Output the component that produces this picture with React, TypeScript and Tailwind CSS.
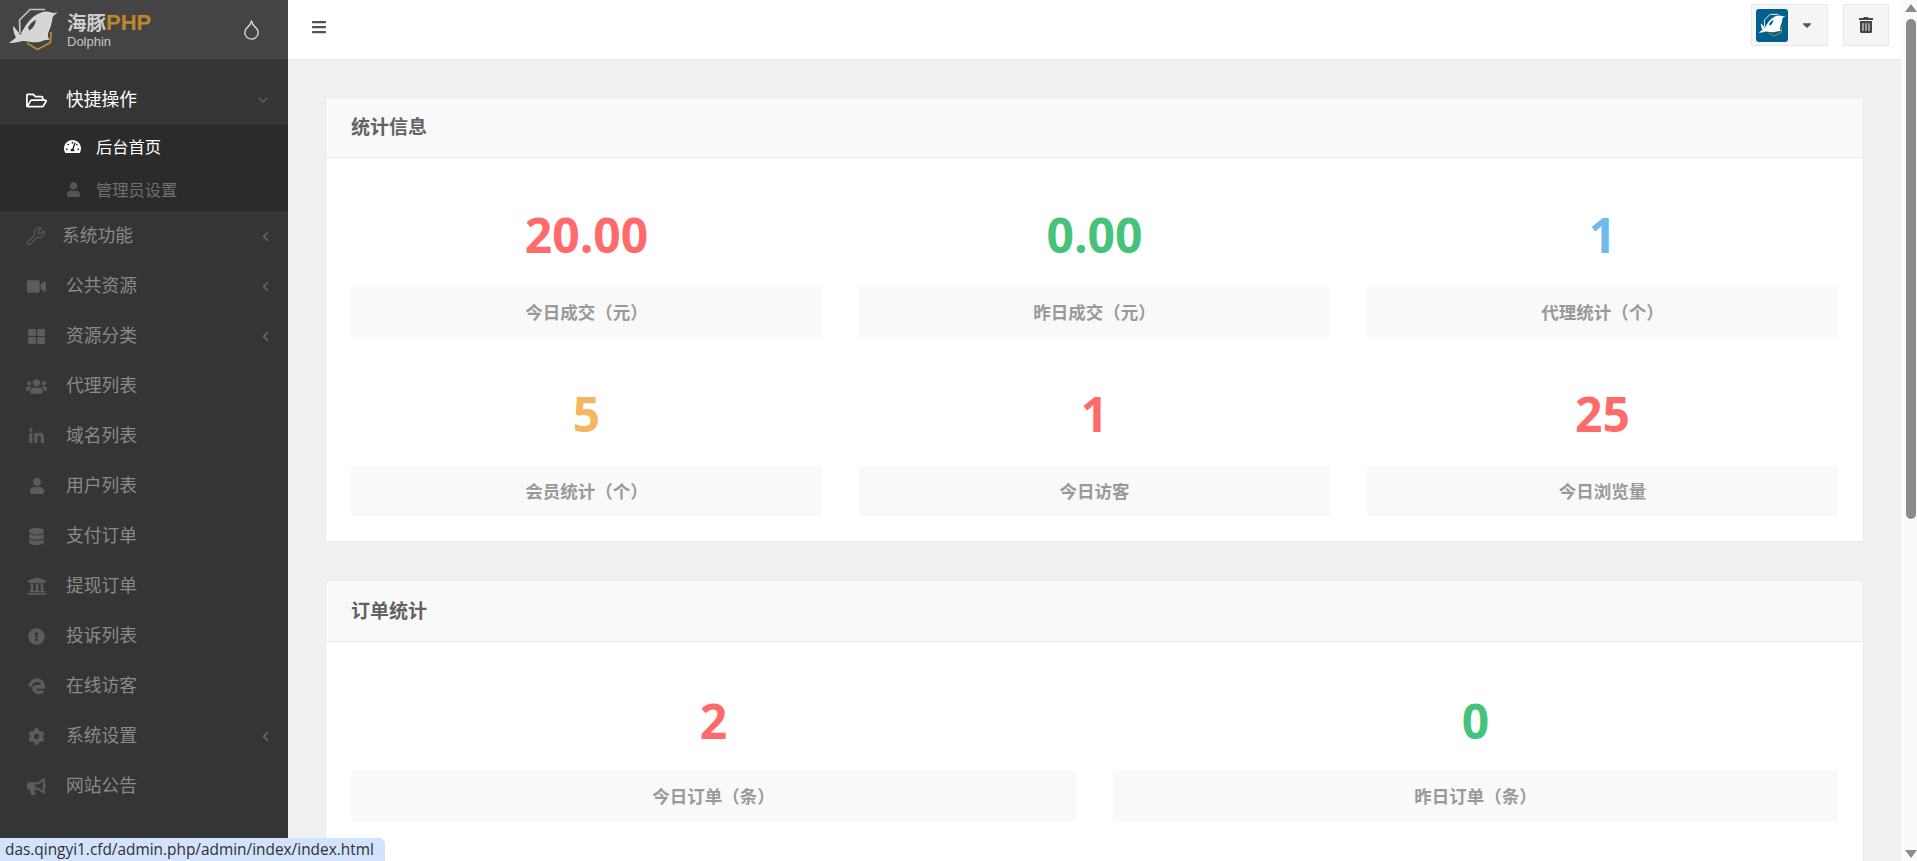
import React from "react";
import {
  FaRegFolderOpen, FaTachometerAlt, FaUser, FaVideo, FaThLarge, FaUsers, FaLinkedinIn, FaDatabase,
  FaUniversity, FaExclamationCircle, FaCog, FaBullhorn, FaBars, FaTrashAlt, FaCaretDown,
} from "react-icons/fa";
import { ChevronLeft, ChevronDown, Wrench, Droplet } from "lucide-react";

const cjk = "font-['Open_Sans','Noto_Sans_CJK_SC',sans-serif]";

function Dolphin({ className, viewBox, body, hex, gold, cut }: { className?: string; viewBox: string; body: string; hex: string; gold: string; cut: string }) {
  return (
    <svg viewBox={viewBox} className={className}>
      <path d="M20 33 L19.5 20 L30 9.5 L45 9.5" fill="none" stroke={hex} strokeWidth="1.7" />
      <path d="M27 43 L37.5 49.5 L50.5 42.5 L51 32" fill="none" stroke={gold} strokeWidth="1.8" />
      <path
        d="M58.5 11.5 C55.5 13.5 53 13 50 12 C44 10 37 13.5 32 18 C27 22.5 23 29 20.5 35 C18 32 15.5 28 13 26 C13 31 14.5 35 16 37.5 C13.5 39.5 11 41.5 9 43 C14 43.5 19 41.5 23 41 C29 41.5 35 43.5 41 41.5 C44 40.5 46.5 39.5 50 40 C47.5 37 47.5 34.5 49 31 C51 26.5 52 22 52.5 18 C53 15.5 56 14 58.5 11.5 Z"
        fill={body}
      />
      <path d="M28 27.5 C30 24 33 21 36 20 C35.5 24 33.5 28 29.5 30.5 Z" fill={cut} />
    </svg>
  );
}

function EdgeIcon() {
  return (
    <svg viewBox="0 0 24 24" className="w-[17px] h-[17px]" fill="none" stroke="#5c5c5c" strokeWidth="5">
      <path d="M2.5 12 C4 6 9 3 13 3 C18 3 21.5 7 21.5 12.5 H8 M8 12.5 C8 17 11 20.5 15 20.5 C17.5 20.5 19.5 20 21.5 18.5" />
    </svg>
  );
}

type Item = { icon: React.ReactNode; label: string; arrow?: boolean; shift?: boolean };
const items: Item[] = [
  { icon: <Wrench className="w-[20px] h-[20px] text-[#5c5c5c]" strokeWidth={1.4} />, label: "系统功能", arrow: true, shift: true },
  { icon: <FaVideo className="w-[19px] h-[19px] text-[#5c5c5c]" />, label: "公共资源", arrow: true },
  { icon: <FaThLarge className="w-[17px] h-[17px] text-[#5c5c5c]" />, label: "资源分类", arrow: true },
  { icon: <FaUsers className="w-[21px] h-[21px] text-[#5c5c5c]" />, label: "代理列表" },
  { icon: <FaLinkedinIn className="w-[17px] h-[17px] text-[#5c5c5c]" />, label: "域名列表" },
  { icon: <FaUser className="w-[14px] h-[16px] text-[#5c5c5c]" />, label: "用户列表" },
  { icon: <FaDatabase className="w-[17px] h-[17px] text-[#5c5c5c]" />, label: "支付订单" },
  { icon: <FaUniversity className="w-[20px] h-[20px] text-[#5c5c5c]" />, label: "提现订单" },
  { icon: <FaExclamationCircle className="w-[17px] h-[17px] text-[#5c5c5c]" />, label: "投诉列表" },
  { icon: <EdgeIcon />, label: "在线访客" },
  { icon: <FaCog className="w-[17px] h-[17px] text-[#5c5c5c]" />, label: "系统设置", arrow: true },
  { icon: <FaBullhorn className="w-[19px] h-[19px] text-[#5c5c5c]" />, label: "网站公告" },
];

function Stat({ value, label, color, low }: { value: string; label: string; color: string; low?: boolean }) {
  return (
    <div>
      <div className={`h-[104px] ${low ? "pt-[4px]" : ""} flex items-center justify-center text-[48px] font-bold ${color}`}>{value}</div>
      <div className="h-[50px] flex items-center justify-center bg-[#f9f9f9] text-[17.5px] font-bold text-[#999999]">{label}</div>
    </div>
  );
}

function Card({ title, cols, tall, children }: { title: string; cols: string; tall?: boolean; children: React.ReactNode }) {
  return (
    <section className="bg-white border border-[#eaeaea] mb-[38px]">
      <div className={`${tall ? "h-[61px] pt-[1px]" : "h-[60px]"} flex items-center px-[25px] bg-[#f9f9f9] border-b border-[#eaeaea] text-[19px] font-bold text-[#626262]`}>
        {title}
      </div>
      <div className={`grid ${cols} gap-x-[37px] gap-y-[25px] p-[25px] ${tall ? "pb-[120px]" : ""}`}>{children}</div>
    </section>
  );
}

export default function App() {
  return (
    <div className={`h-screen w-full flex overflow-hidden bg-[#f0f0f0] relative ${cjk}`}>
      <aside className="w-[288px] shrink-0 bg-[#353535] flex flex-col">
        <div className="h-[59px] shrink-0 flex items-center bg-[#444444] relative">
          <Dolphin className="w-[60px] h-[59px] shrink-0" viewBox="0 0 60 59" body="#d6d6d6" hex="#c4c4c4" gold="#c08a2c" cut="#444444" />
          <div className="ml-[7px] flex flex-col leading-none">
            <div className="flex items-center h-[23px]">
              <span className="text-[19.5px] font-bold text-[#cfcfcf]">海豚</span>
              <span className="text-[22px] font-bold text-[#bd872b] font-['Liberation_Sans',sans-serif]">PHP</span>
            </div>
            <span className="text-[13px] text-[#c4c4c4] font-['Liberation_Sans',sans-serif] leading-[13px]">Dolphin</span>
          </div>
          <Droplet className="w-[23px] h-[23px] ml-auto mr-[25px] text-[#dddddd]" strokeWidth={1.4} />
        </div>
        <nav className="pt-[16px]">
          <div className="h-[50px] flex items-center text-white text-[17.75px]">
            <span className="w-[66px] pl-[26px] shrink-0"><FaRegFolderOpen className="w-[21px] h-[19px]" /></span>
            <span className="pb-[1px]">快捷操作</span>
            <ChevronDown className="w-[16px] h-[16px] ml-auto mr-[17px] text-[#5c5c5c]" />
          </div>
          <div className="bg-[#2b2b2b]">
            <div className="h-[43px] flex items-center text-white text-[16.25px]">
              <span className="w-[96px] pl-[64px] shrink-0"><FaTachometerAlt className="w-[17px] h-[17px]" /></span>
              <span className="pt-[1px]">后台首页</span>
            </div>
            <div className="h-[43px] flex items-center text-[#6f6f6f] text-[16.25px]">
              <span className="w-[96px] pl-[67px] shrink-0"><FaUser className="w-[13px] h-[15px] text-[#555555]" /></span>
              <span className="pt-[1px]">管理员设置</span>
            </div>
          </div>
          {items.map((it) => (
            <div key={it.label} className="h-[50px] flex items-center text-[#8a8a8a] text-[17.75px]">
              <span className={`${it.shift ? "w-[62px] -translate-x-[1px] pr-[1px]" : "w-[66px]"} shrink-0 flex pl-[26px]`}>
                <span className="w-[21px] flex justify-center">{it.icon}</span>
              </span>
              <span className="pb-[1px]">{it.label}</span>
              {it.arrow && <ChevronLeft className="w-[15px] h-[15px] ml-auto mr-[15px] text-[#6a6a6a]" strokeWidth={2.5} />}
            </div>
          ))}
        </nav>
      </aside>

      <div className="flex-1 min-w-0 min-h-0 flex flex-col">
        <header className="h-[59px] shrink-0 bg-white flex items-center px-[12px] shadow-[0_1px_2px_rgba(0,0,0,0.04)]">
          <FaBars className="w-[16px] h-[16px] ml-[11px] mb-[5px] text-[#555555]" />
          <div className="ml-auto flex items-start self-start pt-[4px]">
            <div className="w-[77px] h-[42px] bg-[#f5f5f5] border border-[#e9e9e9] flex items-center pl-[4px]">
              <span className="w-[32px] h-[33px] rounded-[3px] bg-[#005f8c] flex items-center justify-center">
                <Dolphin className="w-[30px] h-[28px]" viewBox="6 6 55 46" body="#ffffff" hex="#ffffff" gold="#c08a2c" cut="#005f8c" />
              </span>
              <FaCaretDown className="w-[14px] h-[14px] ml-[12px] text-[#555555]" />
            </div>
            <div className="w-[46px] h-[42px] ml-[15px] bg-[#f5f5f5] border border-[#e9e9e9] flex items-center justify-center">
              <FaTrashAlt className="w-[14px] h-[16px] text-[#444444]" />
            </div>
          </div>
        </header>
        <main className="px-[37px] pt-[38px] min-h-0 overflow-hidden">
          <Card title="统计信息" cols="grid-cols-3">
            <Stat value="20.00" label="今日成交（元）" color="text-[#ff6b6b]" />
            <Stat value="0.00" label="昨日成交（元）" color="text-[#46c37b]" />
            <Stat value="1" label="代理统计（个）" color="text-[#70b9eb]" />
            <Stat value="5" label="会员统计（个）" color="text-[#f3b760]" />
            <Stat value="1" label="今日访客" color="text-[#ff6b6b]" />
            <Stat value="25" label="今日浏览量" color="text-[#ff6b6b]" />
          </Card>
          <Card title="订单统计" cols="grid-cols-2" tall>
            <Stat value="2" label="今日订单（条）" color="text-[#ff6b6b]" low />
            <Stat value="0" label="昨日订单（条）" color="text-[#46c37b]" low />
          </Card>
        </main>
      </div>

      <div className="w-[16px] shrink-0 bg-[#fafafa] flex flex-col items-center pl-[3px]">
        <div className="h-[15px] flex items-center justify-center">
          <svg viewBox="0 0 12 8" className="w-[12px] h-[8px]"><path d="M6 0 L12 8 L0 8 Z" fill="#8a8a8a" /></svg>
        </div>
        <div className="w-[10px] h-[500px] mt-[4px] rounded-full bg-[#8a8a8a]" />
        <div className="flex-1" />
        <div className="h-[15px] flex items-center justify-center">
          <svg viewBox="0 0 12 8" className="w-[12px] h-[8px]"><path d="M0 0 L12 0 L6 8 Z" fill="#8a8a8a" /></svg>
        </div>
      </div>

      <div className="absolute left-0 bottom-0 h-[23px] w-[385px] bg-[#d3e3fd] rounded-tr-[6px] pl-[5px] text-[15.4px] leading-[23px] text-[#303030] whitespace-nowrap overflow-hidden font-['Open_Sans',sans-serif]">
        das.qingyi1.cfd/admin.php/admin/index/index.html
      </div>
    </div>
  );
}
